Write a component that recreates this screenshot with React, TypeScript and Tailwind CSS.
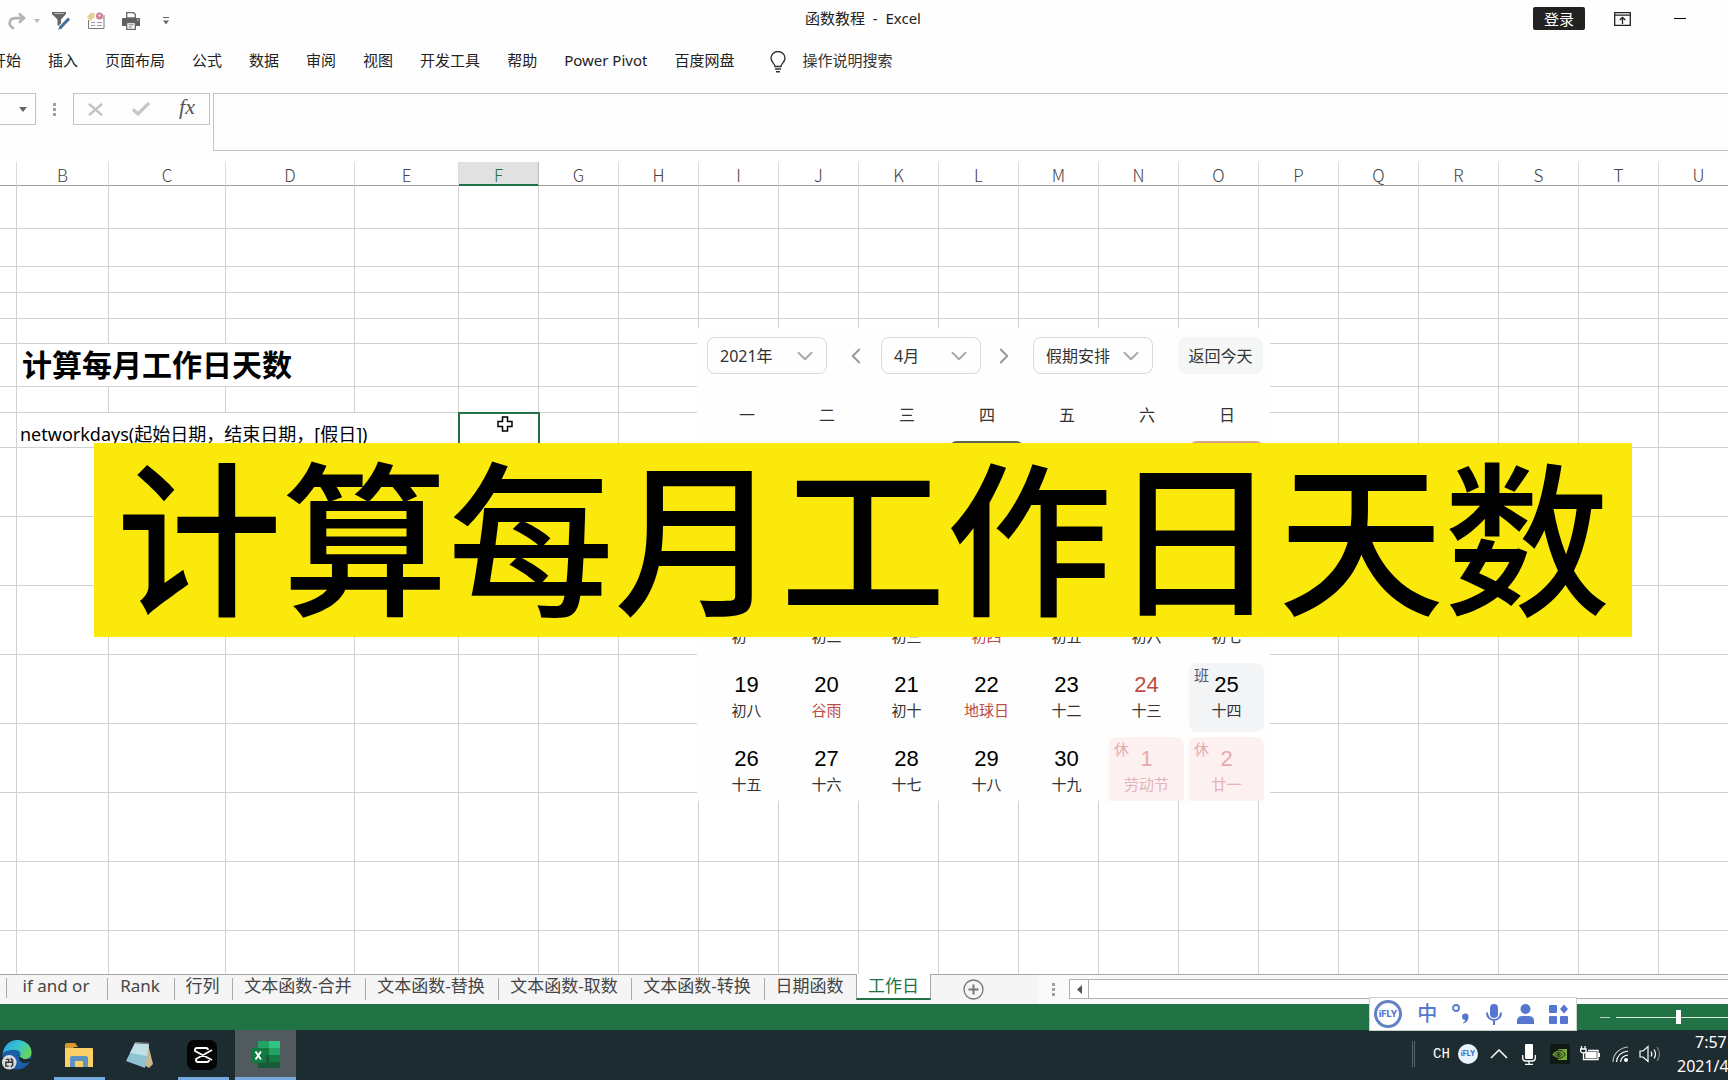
import React from "react";
import { ChevronDown, ChevronLeft, ChevronRight } from "lucide-react";
import clsx from "clsx";

const menuItems = [
  "开始",
  "插入",
  "页面布局",
  "公式",
  "数据",
  "审阅",
  "视图",
  "开发工具",
  "帮助",
  "Power Pivot",
  "百度网盘",
];

const columns = [
  { name: "", width: "w-[17px]" },
  { name: "B", width: "w-[92px]" },
  { name: "C", width: "w-[117px]" },
  { name: "D", width: "w-[129px]" },
  { name: "E", width: "w-[104px]" },
  ..."FGHIJKLMNOPQRSTU".split("").map((name) => ({ name, width: "w-20" })),
];

type Row = { height: string; text?: string; span?: number; style?: string };

const rows: Row[] = [
  { height: "h-[43px]" },
  { height: "h-[38px]" },
  { height: "h-[26px]" },
  { height: "h-[26px]" },
  { height: "h-[25px]" },
  {
    height: "h-[43px]",
    text: "计算每月工作日天数",
    span: 3,
    style: "pl-[5px] align-middle text-[30px] leading-10 font-bold",
  },
  { height: "h-[26px]" },
  {
    height: "h-[35px]",
    text: "networkdays(起始日期，结束日期，[假日])",
    span: 4,
    style: "pl-[3px] pb-px align-bottom text-[18px] leading-6",
  },
  { height: "h-[69px]" },
  { height: "h-[69px]" },
  { height: "h-[69px]" },
  { height: "h-[69px]" },
  { height: "h-[69px]" },
  { height: "h-[69px]" },
  { height: "h-[69px]" },
  { height: "h-[69px]" },
];

const weekdays = ["一", "二", "三", "四", "五", "六", "日"];

type Day = {
  day?: number;
  lunar?: string;
  badge?: string;
  box?: string;
  dayColor?: string;
  lunarColor?: string;
};

const red = "text-[#bf4b45]";
const rest = {
  badge: "休",
  box: "border-[#fdf0f0] bg-[#fdf0f0]",
  dayColor: "text-[#e6a9ad]",
  lunarColor: "text-[#e3b5ba]",
};

// the first weeks lie under the banner, only their outlines stay
const days: Day[] = [
  {},
  {},
  {},
  { box: "border-[#5c6650]" },
  {},
  {},
  { box: "border-[#d9a08a]" },
  ...Array.from({ length: 7 }, () => ({})),
  { lunar: "初一" },
  { lunar: "初二" },
  { lunar: "初三" },
  { lunar: "初四", lunarColor: red },
  { lunar: "初五" },
  { lunar: "初六" },
  { lunar: "初七" },
  { day: 19, lunar: "初八" },
  { day: 20, lunar: "谷雨", lunarColor: red },
  { day: 21, lunar: "初十" },
  { day: 22, lunar: "地球日", lunarColor: red },
  { day: 23, lunar: "十二" },
  { day: 24, lunar: "十三", dayColor: red },
  {
    day: 25,
    lunar: "十四",
    badge: "班",
    box: "border-[#f3f4f6] bg-[#f3f4f6]",
  },
  { day: 26, lunar: "十五" },
  { day: 27, lunar: "十六" },
  { day: 28, lunar: "十七" },
  { day: 29, lunar: "十八" },
  { day: 30, lunar: "十九" },
  { day: 1, lunar: "劳动节", ...rest },
  { day: 2, lunar: "廿一", ...rest },
];

const sheets = [
  { name: "if and or", width: "w-[101px]" },
  { name: "Rank", width: "w-[67px]" },
  { name: "行列", width: "w-[58px]" },
  { name: "文本函数-合并", width: "w-[133px]" },
  { name: "文本函数-替换", width: "w-[133px]" },
  { name: "文本函数-取数", width: "w-[133px]" },
  { name: "文本函数-转换", width: "w-[133px]" },
  { name: "日期函数", width: "w-[91px]" },
];

function Dots() {
  return (
    <div className="flex flex-col gap-0.5">
      <i className="size-[3px] bg-[#a0a0a0]" />
      <i className="size-[3px] bg-[#a0a0a0]" />
      <i className="size-[3px] bg-[#a0a0a0]" />
    </div>
  );
}

function TitleBar() {
  return (
    <header className="grid h-9 grid-cols-[1fr_auto_1fr] items-center pt-px">
      <div className="flex items-center pt-1 pl-2">
        <button aria-label="恢复" className="mr-2">
          <svg width="18" height="18" viewBox="0 0 18 18" fill="none" stroke="#b4b4b4" strokeWidth="2.6">
            <path d="M11 1.500l5 4.600-5 4.600M15 6.100H8C0 6.100 0 14 6 16.500" />
          </svg>
        </button>
        <svg width="6" height="4" viewBox="0 0 6 4" className="mr-3" fill="#bbb">
          <path d="M0 0h6L3 4z" />
        </svg>
        <button aria-label="筛选" className="mr-[17px]">
          <svg width="18" height="20" viewBox="0 0 18 20" fill="none">
            <path d="M0 1h14v2L9 8.500V17L5.500 14V8.500L0 3z" fill="#666" />
            <path d="M2.500 2.500h9" stroke="#bbb" />
            <path d="M17 7.500L8 17" stroke="#fff" strokeWidth="5" />
            <path d="M17 7.500L8 17" stroke="#41719c" strokeWidth="3" />
            <path d="M8.300 14.600L6 19l4.300-2z" fill="#41719c" />
          </svg>
        </button>
        <button aria-label="表单" className="mr-[17px]">
          <svg width="18" height="18" viewBox="0 0 18 18" fill="none">
            <path d="M1.500 8v8.500h15.500V3" stroke="#777" />
            <path d="M4 10.500h4M10 10.500h5M4 13.500h4M10 13.500h5" stroke="#999" />
            <path d="M0 5l4-4.500 4 1-.5 4L3 9z" fill="#e8cf96" />
            <circle cx="12.500" cy="4" r="3.500" fill="#cf7f8d" />
            <circle cx="12.500" cy="3.500" r="1.200" fill="#f3dce0" />
          </svg>
        </button>
        <button aria-label="打印" className="mr-[23px]">
          <svg width="18" height="18" viewBox="0 0 18 18">
            <path d="M0 7q0-1 1-1h16q1 0 1 1v7H0z" fill="#5f5f5f" />
            <path d="M4.700 6V.700h7l1.600 1.600V6z" fill="#fff" stroke="#666" strokeWidth="1.300" />
            <path d="M4.700 10.500h8.600v6.800H4.700z" fill="#fff" stroke="#666" strokeWidth="1.300" />
            <path d="M6.500 12.800h5M6.500 15h3.500" stroke="#777" />
            <path d="M15 8h1.500" stroke="#fff" />
          </svg>
        </button>
        <svg width="6" height="8" viewBox="0 0 6 8" fill="#666">
          <path d="M0 0h6v1H0zM0 3.500h6L3 7.500z" />
        </svg>
      </div>
      <h1 className="pr-0.5 text-[15px] whitespace-pre">函数教程  -  Excel</h1>
      <div className="flex items-center justify-end pr-[42px]">
        <button className="mr-[29px] h-[23px] w-[52px] rounded-[2px] bg-[#222] text-[15px] leading-5 text-white">
          登录
        </button>
        <button aria-label="功能区显示选项" className="mr-[43px]">
          <svg width="17" height="14" viewBox="0 0 17 14" fill="none" stroke="#222" strokeWidth="1.300">
            <path d="M.7.700h15.600v12.600H.7zM.7 3.200h15.600M8.500 12V5.500M5.700 8l2.800-2.600L11.300 8" />
          </svg>
        </button>
        <button aria-label="最小化" className="h-4 w-3">
          <span className="block h-px bg-black" />
        </button>
      </div>
    </header>
  );
}

function Menu() {
  return (
    <nav className="flex h-[50px] items-center pb-0.5 text-[15px] whitespace-nowrap">
      <div className="-ml-[9px] flex gap-[27px]">
        {menuItems.map((item) => (
          <button key={item}>{item}</button>
        ))}
      </div>
      <svg width="16" height="22" viewBox="0 0 16 22" className="mt-1 mr-4 ml-9" fill="none" stroke="#333" strokeWidth="1.400">
        <path d="M5 15.500c0-3-4-4-4-8.500a7 6.500 0 0 1 14 0c0 4.500-4 5.500-4 8.500zM5 18h6M6 20.700h4" />
      </svg>
      <button className="text-[#333]">操作说明搜索</button>
    </nav>
  );
}

function FormulaBar() {
  return (
    <div className="flex items-start pt-[7px] pb-[11px]">
      <button
        aria-label="名称框"
        className="flex h-8 w-9 items-center justify-end border border-l-0 border-[#c3c3c3] pr-2"
      >
        <svg width="8" height="5" viewBox="0 0 8 5" fill="#666">
          <path d="M0 0h8L4 5z" />
        </svg>
      </button>
      <div className="flex h-8 w-[37px] items-center justify-center">
        <Dots />
      </div>
      <div className="mr-[3px] flex h-8 w-[137px] items-center justify-between border border-[#c3c3c3] bg-[#fdfdfd] pr-2.5 pl-3.5">
        <button aria-label="取消">
          <svg width="15" height="13" viewBox="0 0 16 14" fill="none" stroke="#c0c0c0" strokeWidth="2.600">
            <path d="M1 1l14 12M15 1L1 13" />
          </svg>
        </button>
        <button aria-label="输入" className="ml-1">
          <svg width="18" height="14" viewBox="0 0 18 14" fill="none" stroke="#c6c6c6" strokeWidth="3.200">
            <path d="M1 7.500l5 4.500L17 1" />
          </svg>
        </button>
        <button
          aria-label="插入函数"
          className="w-6 pb-1 font-['Liberation_Serif',serif] text-[22px] leading-6 text-[#555] italic"
        >
          fx
        </button>
      </div>
      <input
        aria-label="编辑栏"
        className="h-[58px] flex-1 border border-r-0 border-[#c3c3c3] bg-[#fdfdfd] px-2"
      />
    </div>
  );
}

function Sheet() {
  return (
    <table className="w-[1739px] table-fixed border-separate border-spacing-0">
      <thead>
        <tr>
          {columns.map(({ name, width }) => (
            <th
              key={name}
              className={clsx(
                "h-6 border-r border-b p-0 pt-0.5 font-['Noto_Sans_CJK_SC',sans-serif] text-[17px] leading-5 font-light",
                width,
                name === "F"
                  ? "border-r-[#bbb] border-b-[#217346] bg-[#e1e1e1] text-[#217346] shadow-[inset_0_-1px_#217346]"
                  : "border-r-[#dcdcdc] border-b-[#a0a0a0] text-[#444]"
              )}
            >
              {name}
            </th>
          ))}
        </tr>
      </thead>
      <tbody>
        {rows.map((row, r) => (
          <tr key={r}>
            {columns.map((column, c) => {
              const span = row.span || 1;
              if (c > 1 && c <= span) return null;
              return (
                <td
                  key={column.name}
                  colSpan={c === 1 ? span : 1}
                  className={clsx(
                    "border-r border-b border-[#d2d2d2] p-0 whitespace-nowrap",
                    row.height,
                    c === 1 && row.style,
                    r === 7 && column.name === "F" && "outline-2 -outline-offset-1 outline-[#217346]"
                  )}
                >
                  {c === 1 && row.text}
                </td>
              );
            })}
          </tr>
        ))}
      </tbody>
    </table>
  );
}

function Picker({ label, value, className }: { label: string; value: string; className: string }) {
  return (
    <label
      className={clsx(
        "flex h-[37px] shrink-0 items-center rounded-lg border border-[#d9d9d9] pr-3 pl-3",
        className
      )}
    >
      <select aria-label={label} className="min-w-0 flex-1 appearance-none bg-transparent">
        <option>{value}</option>
      </select>
      <ChevronDown size={26} strokeWidth={1.8} className="-mr-1 -ml-2 shrink-0 text-[#aaa]" />
    </label>
  );
}

function Calendar() {
  return (
    <section className="absolute top-[166px] left-[697px] h-[473px] w-[573px] overflow-hidden bg-[#fefefe] px-[10px] pt-[9px] text-[#333]">
      <div className="flex items-center text-[16px]">
        <Picker label="年份" value="2021年" className="w-[120px]" />
        <button aria-label="上个月" className="mx-[18px] w-[18px] shrink-0">
          <ChevronLeft size={26} strokeWidth={1.8} className="-ml-0.5 text-[#999]" />
        </button>
        <Picker label="月份" value="4月" className="w-[100px]" />
        <button aria-label="下个月" className="mr-5 ml-[14px] w-[18px] shrink-0">
          <ChevronRight size={26} strokeWidth={1.8} className="-ml-1 text-[#999]" />
        </button>
        <Picker label="假期" value="假期安排" className="w-[120px]" />
        <button className="ml-[25px] h-[37px] w-[85px] shrink-0 rounded-lg bg-[#f5f6f6]">返回今天</button>
      </div>
      <div className="mt-[29px] grid w-[560px] grid-cols-7 text-center text-[16px] leading-6">
        {weekdays.map((name) => (
          <span key={name}>{name}</span>
        ))}
      </div>
      <div className="mt-[14px] grid w-[560px] grid-cols-7 gap-y-[5px]">
        {days.map((item, i) => (
          <button
            key={i}
            className={clsx(
              "relative ml-0.5 flex h-[69px] w-[75px] flex-col items-center rounded-lg border-2 pt-2",
              item.box || "border-transparent"
            )}
          >
            {item.badge && (
              <span
                className={clsx(
                  "absolute top-0 left-[3px] text-[15px] leading-5",
                  item.dayColor || "text-[#4e5877]"
                )}
              >
                {item.badge}
              </span>
            )}
            <span
              className={clsx(
                "h-6 font-['Liberation_Sans',sans-serif] text-[22px] leading-6",
                item.dayColor || "text-black"
              )}
            >
              {item.day}
            </span>
            <span className={clsx("pt-[3px] text-[15px] leading-5", item.lunarColor)}>
              {item.lunar}
            </span>
          </button>
        ))}
      </div>
    </section>
  );
}

function SheetTabs() {
  return (
    <div className="flex h-[30px] shrink-0 items-start border-t border-[#a8a8a8] bg-[#f5f5f5] text-[17px] text-[#444]">
      <div className="flex w-[7px] justify-end pt-[3px]">
        <i className="h-5 w-px bg-[#aaa]" />
      </div>
      {sheets.map(({ name, width }, i) => (
        <button
          key={name}
          className={clsx(
            "mt-[3px] h-[22px] shrink-0 pr-0.5 pb-2 leading-4 whitespace-nowrap",
            width,
            i < sheets.length - 1 && "border-r border-[#aaa]"
          )}
        >
          {name}
        </button>
      ))}
      <button className="-mt-px h-[26px] w-[75px] shrink-0 border-x border-b-2 border-x-[#a8a8a8] border-b-[#217346] bg-white leading-5 text-[#217346]">
        工作日
      </button>
      <button aria-label="新工作表" className="mt-1 ml-8">
        <svg width="21" height="21" viewBox="0 0 21 21" fill="none" stroke="#777">
          <circle cx="10.500" cy="10.500" r="9.500" strokeWidth="1.300" />
          <path d="M5.500 10.500h10M10.500 5.500v10" strokeWidth="2" />
        </svg>
      </button>
      <div className="ml-[54px] flex h-full flex-1 items-start bg-[#fafafa] pt-1">
        <div className="flex h-5 w-[31px] items-center justify-center">
          <Dots />
        </div>
        <button
          aria-label="向左滚动"
          className="flex h-5 w-5 items-center justify-center border border-[#b0b0b0] bg-white"
        >
          <svg width="5" height="9" viewBox="0 0 5 9" fill="#555">
            <path d="M5 0v9L0 4.500z" />
          </svg>
        </button>
        <div className="h-5 flex-1 border-y border-[#b0b0b0] bg-white" />
      </div>
    </div>
  );
}

function InputMethodBar() {
  return (
    <div className="absolute -top-[7px] right-[151px] flex h-[34px] w-52 items-center justify-between border border-[#c9d2cc] bg-white pr-2 pl-1 text-[#5577cf]">
      <span className="flex size-7 items-center justify-center rounded-full border-[3px] border-[#6282c4] font-['Inter',sans-serif] text-[9px] font-extrabold">
        iFLY
      </span>
      <button className="text-[20px] leading-6 font-medium">中</button>
      <svg width="18" height="20" viewBox="0 0 18 20" fill="none">
        <circle cx="4" cy="4" r="3" stroke="currentColor" strokeWidth="1.800" />
        <path d="M16.500 13c0 3-1.500 5.500-5 6.500l-.5-1c1.500-.700 2.200-1.500 2.200-2.500a3.200 3.200 0 1 1 3.300-3z" fill="currentColor" />
      </svg>
      <svg width="16" height="21" viewBox="0 0 16 21" fill="none" stroke="currentColor" strokeWidth="2">
        <rect x="4" width="8" height="14" rx="4" fill="currentColor" stroke="none" />
        <path d="M1 8.500c0 10 14 10 14 0M8 16v5" />
      </svg>
      <svg width="17" height="20" viewBox="0 0 17 20" fill="currentColor">
        <circle cx="8.500" cy="5" r="5" />
        <path d="M0 20v-3c0-3 2-5 5-5h7c3 0 5 2 5 5v3z" />
      </svg>
      <svg width="19" height="20" viewBox="0 0 19 20" fill="currentColor">
        <rect y="1" width="8" height="8" rx="1" />
        <rect y="12" width="8" height="8" rx="1" />
        <rect x="11" y="12" width="8" height="8" rx="1" />
        <path d="M15 0.500l4 4.500-4 4.500L11 5z" />
      </svg>
    </div>
  );
}

function StatusBar() {
  return (
    <div className="relative flex h-[26px] shrink-0 items-center justify-end bg-[#217346]">
      <InputMethodBar />
      <button aria-label="缩小" className="mr-1.5 w-2.5">
        <span className="block h-px bg-[#b7d3c2]" />
      </button>
      <div className="flex w-28 items-center">
        <span className="h-px w-[60px] bg-[#dbe9e0]" />
        <span className="h-3.5 w-[5px] bg-white" />
        <span className="h-px flex-1 bg-[#dbe9e0]" />
      </div>
    </div>
  );
}

function TaskIcons() {
  return (
    <div className="flex h-full">
      <button aria-label="Edge" className="flex w-[54px] items-center pl-0.5">
        <svg width="30" height="30" viewBox="0 0 31 31">
          <defs>
            <linearGradient id="edge-top" x1="0" y1="0" x2="1" y2="0.500">
              <stop offset="0" stopColor="#2b9fe0" />
              <stop offset="0.550" stopColor="#35c3cf" />
              <stop offset="1" stopColor="#63d45f" />
            </linearGradient>
          </defs>
          <circle cx="15.500" cy="15.500" r="15" fill="#1a5fa8" />
          <path d="M1 13C3 4 9 0 16 0c9 0 15 7 14.500 13 0 5-4 7-8 7-3 0-5-1-4-3 2-4-1-7-6-7-4 0-9 1-11 3z" fill="url(#edge-top)" />
          <path d="M18 17c-2 6 6 9 11 5l1 1.500 1-4.500-8 1z" fill="#1c2b2f" />
          <circle cx="7.500" cy="23" r="7.500" fill="#d9dcdb" />
          <path d="M4 20h3v3H4v4h3m2-8l2 2-2 2h2v3l-2 2" fill="none" stroke="#333" strokeWidth="1.500" />
        </svg>
      </button>
      <button aria-label="文件资源管理器" className="flex w-[51px] items-center justify-center border-y-[3px] border-t-transparent border-b-[#76a9e0] pr-0.5">
        <svg width="28" height="25" viewBox="0 0 28 25">
          <path d="M0 2q0-2 2-2h8l3 4h-3L0 8z" fill="#d9982b" />
          <path d="M0 5h27q1 0 1 1v18H0z" fill="#fbd067" />
          <path d="M5 24V15q0-2 2-2h14q2 0 2 2v9h-5v-6h-8v6z" fill="#5a93c4" />
        </svg>
      </button>
      <button aria-label="记事本" className="flex w-[73px] items-center justify-center pr-1">
        <svg width="27" height="28" viewBox="0 0 27 28">
          <path d="M22 3l5 20-4 4-5-3z" fill="#c9b58f" />
          <path d="M9 2l14 1-4 24L0 20z" fill="#8fc3d1" />
          <path d="M9 2l14 1-2 12L4 12z" fill="#c0dfe6" />
          <path d="M9 1.500l14 1" stroke="#777" strokeWidth="1.500" />
        </svg>
      </button>
      <button aria-label="剪映" className="flex w-[51px] items-center justify-center border-y-[3px] border-t-transparent border-b-[#76a9e0] pr-[3px]">
        <svg width="30" height="30" viewBox="0 0 30 30">
          <rect width="30" height="30" rx="7" fill="#050505" />
          <path d="M25 10L9 19v1q0 2 2 2h9q2 0 2-2M25 20L8 11v-1q0-2 2-2h9q2 0 2 2" fill="none" stroke="#fff" strokeWidth="1.800" />
        </svg>
      </button>
      <button aria-label="Excel" className="ml-1.5 flex w-[61px] items-center justify-center border-y-[3px] border-t-[#505a5f] border-b-[#76a9e0] bg-[#505a5f]">
        <svg width="29" height="28" viewBox="0 0 29 28">
          <path d="M7 0h11v7H7z" fill="#21a366" />
          <path d="M18 0h11v7H18z" fill="#33c481" />
          <path d="M7 7h11v7H7z" fill="#107c41" />
          <path d="M18 7h11v7H18z" fill="#21a366" />
          <path d="M7 14h22v13H7z" fill="#185c37" />
          <path d="M18 14h11v7H18z" fill="#107c41" />
          <rect y="7" width="15" height="15" rx="1.500" fill="#107c41" />
          <path d="M4.500 10.500l5.500 8M10 10.500l-5.500 8" stroke="#fff" strokeWidth="2" />
        </svg>
      </button>
    </div>
  );
}

function Tray() {
  return (
    <div className="flex h-full items-center pb-0.5 text-white">
      <i className="mr-[18px] h-[26px] w-[3px] border-x border-[#56636a]" />
      <span className="mr-2 w-[17px] font-['Liberation_Mono',monospace] text-[14px]">CH</span>
      <span className="mr-3 flex size-5 items-center justify-center rounded-full bg-[#eaf1ff] font-['Inter',sans-serif] text-[7px] font-extrabold text-[#4a74c9]">
        iFLY
      </span>
      <svg width="18" height="10" viewBox="0 0 18 10" className="mr-3.5" fill="none" stroke="#fff" strokeWidth="1.500">
        <path d="M1 9l8-8 8 8" />
      </svg>
      <svg width="14" height="21" viewBox="0 0 14 21" className="mr-3.5" fill="none" stroke="#fff" strokeWidth="1.300">
        <rect x="3" width="8" height="15" rx="1" fill="#fff" stroke="none" />
        <path d="M.7 11v3q0 3 3 3h6.600q3 0 3-3v-3M7 17v3M3 20.300h8" />
      </svg>
      <svg width="20" height="20" viewBox="0 0 20 20" className="mr-2.5">
        <path d="M0 0h20v20H0z" fill="#101a14" />
        <path d="M8 5h9v11H8z" fill="#77a83c" />
        <path d="M2 10.500C6 4.500 13 5 15 10.500c-3 5-9 5-13 0z" fill="#77a83c" stroke="#14200f" />
        <path d="M5 10.500c2-3 5-3 7 0-2 2.500-5 2.500-7 0z" fill="none" stroke="#14200f" />
        <circle cx="8.500" cy="10.500" r="1.300" fill="#14200f" />
      </svg>
      <svg width="20" height="16" viewBox="0 0 20 16" className="mr-3" fill="none" stroke="#fff" strokeWidth="1.300">
        <path d="M1.500 0v3M5 0v3M.5 3h5.500v2q0 2-2.500 2T.5 5zM3.500 7v6.500H18v-9H8M19.300 7v4" />
        <path d="M6 6.500h10v5H6z" fill="#fff" />
      </svg>
      <svg width="17" height="17" viewBox="0 0 17 17" className="mr-2.5" fill="none" stroke="#fff" strokeWidth="1.200">
        <path d="M1 16C1 8 7 2 16 1" opacity="0.700" />
        <path d="M4.500 16C5 10 9 6 16 5M8.500 16c.500-4 3-6.500 7.500-7" />
        <circle cx="14" cy="14" r="2" fill="#fff" stroke="none" />
      </svg>
      <svg width="22" height="18" viewBox="0 0 22 18" fill="none" stroke="#fff" strokeWidth="1.200">
        <path d="M1 6h3l5-4.500v15L4 12H1zM12 6.500q1.700 2.500 0 5M15 4.500q3 4.500 0 9" />
        <path d="M18 2q5 7 0 14" opacity="0.400" />
      </svg>
      <div className="ml-4 w-[51px] text-[16px] leading-6 whitespace-nowrap">
        <div className="pl-[18px]">7:57</div>
        <div>2021/4</div>
      </div>
    </div>
  );
}

export default function App() {
  return (
    <div className="flex h-screen flex-col overflow-hidden bg-[#fefefe] font-['Noto_Sans','Noto_Sans_CJK_SC',sans-serif] text-[#222]">
      <TitleBar />
      <Menu />
      <FormulaBar />
      <main className="relative min-h-0 flex-1 overflow-hidden bg-white text-black">
        <Sheet />
        <Calendar />
        <svg width="16" height="16" viewBox="0 0 16 16" className="absolute top-[254px] left-[497px]" fill="#fff" stroke="#000" strokeWidth="1.500">
          <path d="M5.500 1h5v4.500H15v5h-4.500V15h-5v-4.500H1v-5h4.500z" />
        </svg>
        <h2 className="absolute top-[281px] right-24 left-[94px] flex h-[194px] items-center justify-center bg-[#fbe90b] pb-[18px] font-['Noto_Sans_CJK_SC',sans-serif] text-[166px] leading-none font-medium whitespace-nowrap">
          计算每月工作日天数
        </h2>
      </main>
      <SheetTabs />
      <StatusBar />
      <footer className="flex h-[50px] shrink-0 justify-between bg-[#1c2c30]">
        <TaskIcons />
        <Tray />
      </footer>
    </div>
  );
}
